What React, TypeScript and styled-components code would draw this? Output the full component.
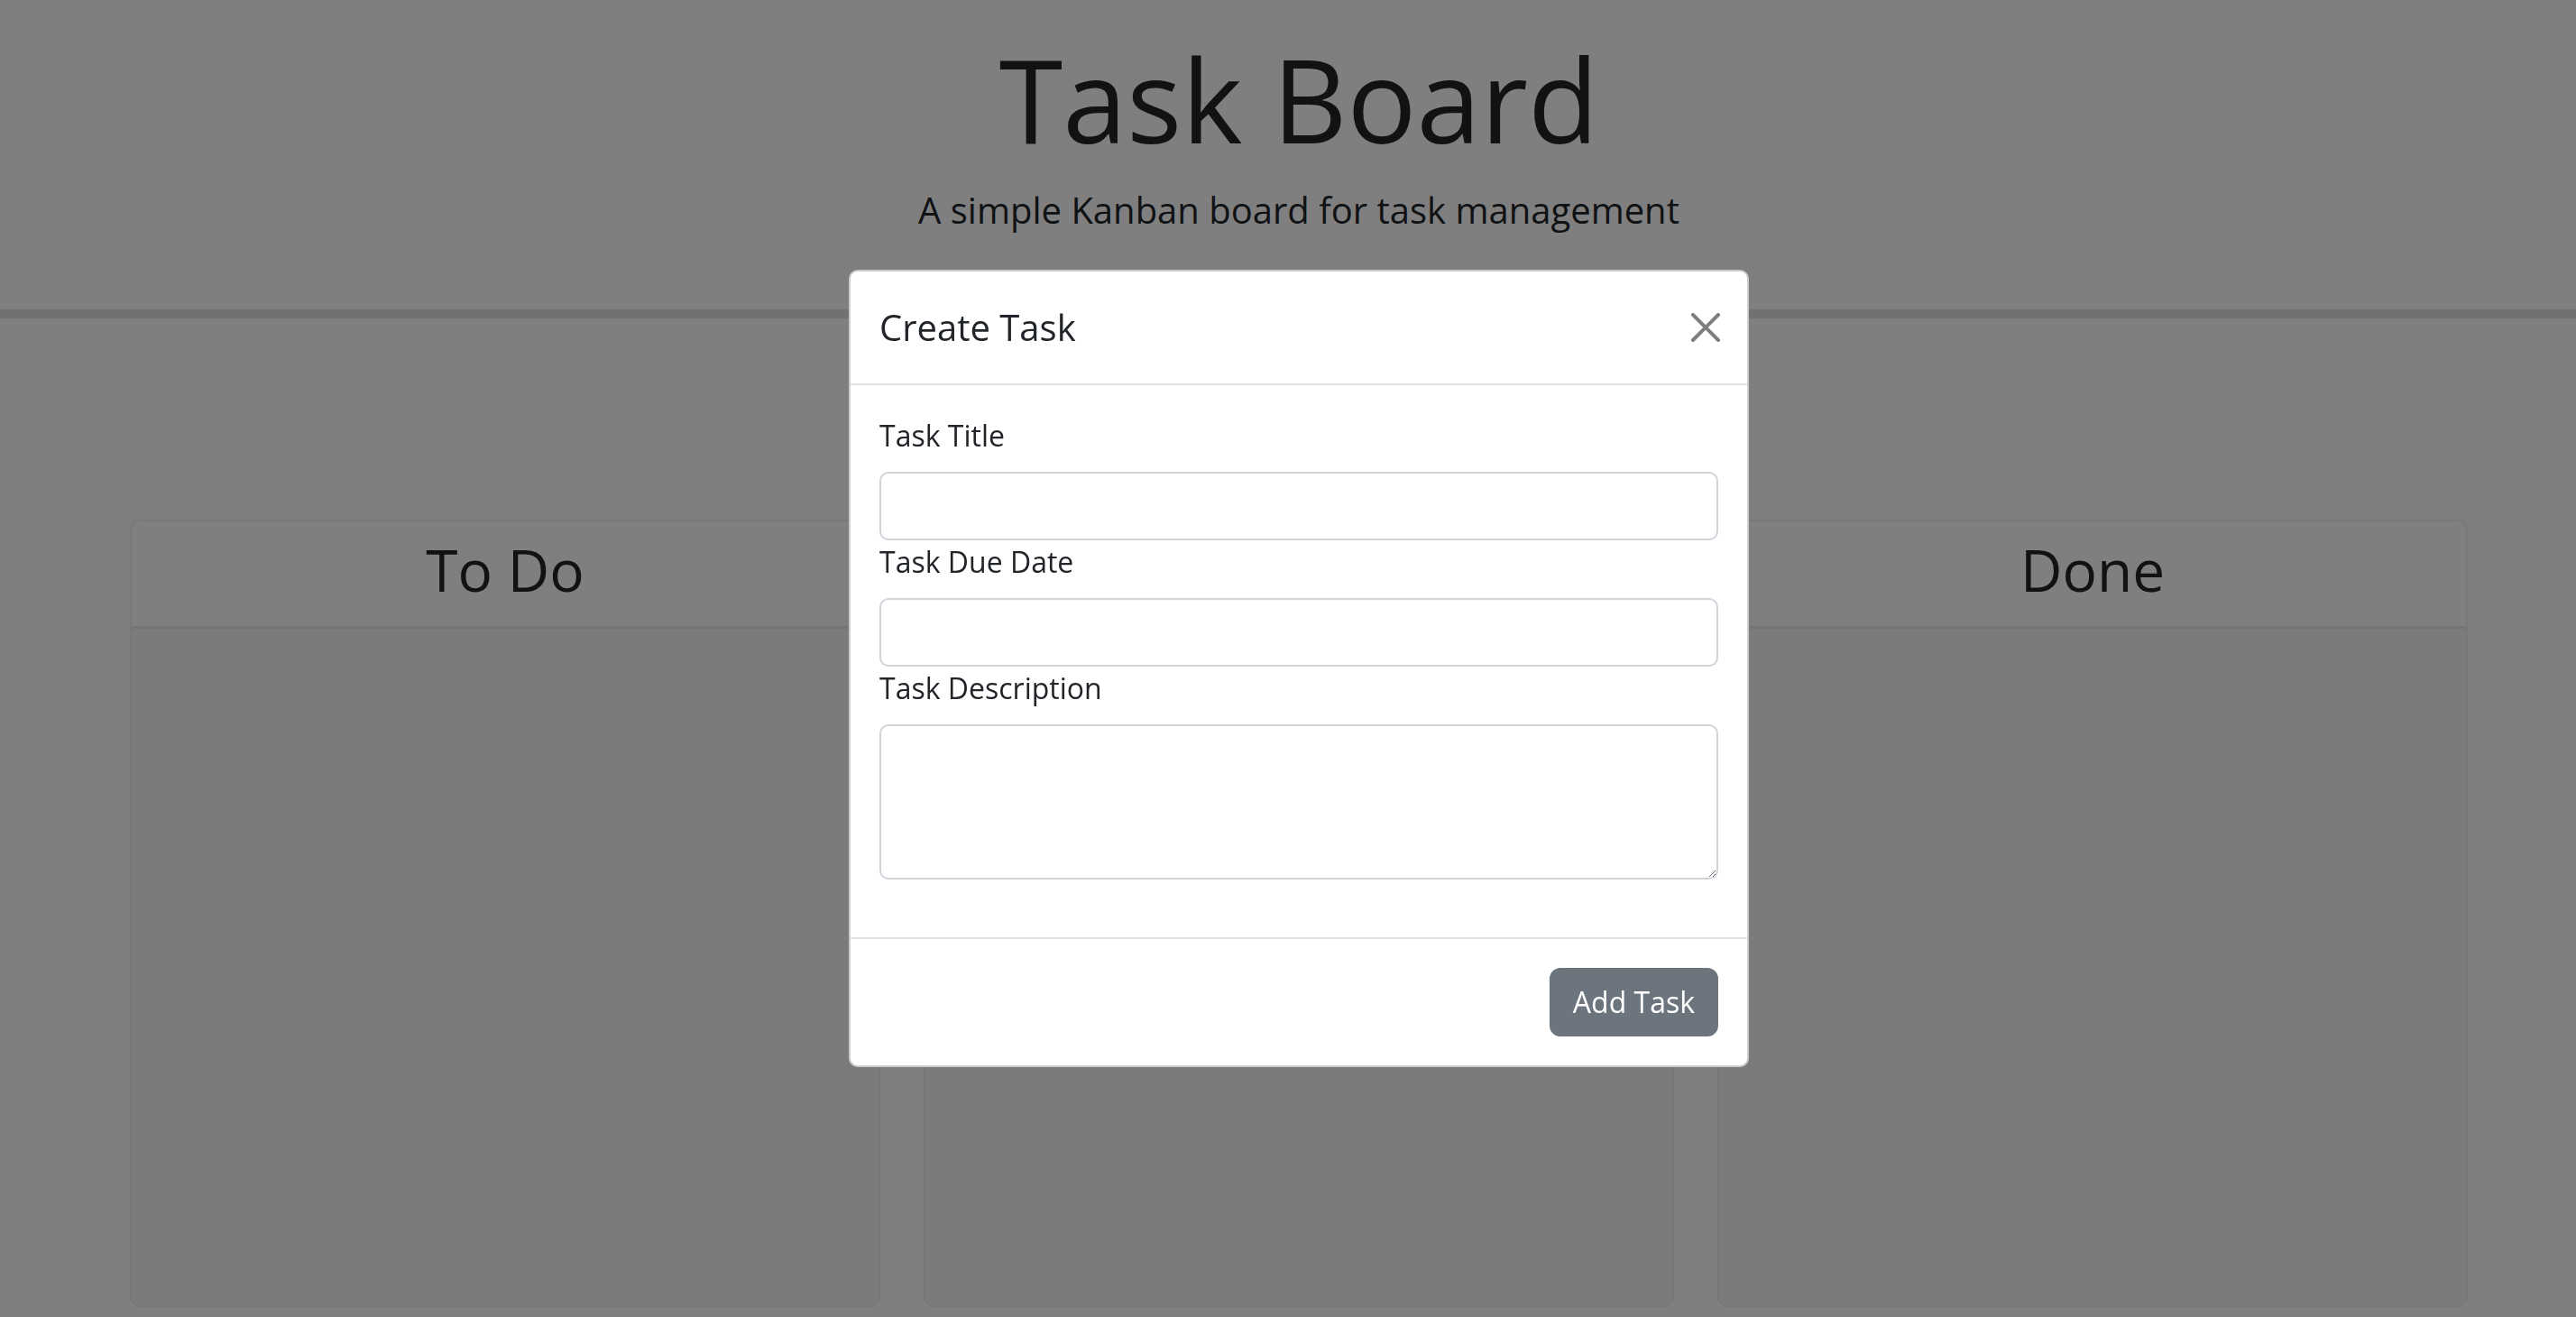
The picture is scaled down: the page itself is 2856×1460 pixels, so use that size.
import React from "react";
import styled, { createGlobalStyle } from "styled-components";

const GlobalStyle = createGlobalStyle`
  html, body {
    margin: 0;
    padding: 0;
    overflow: hidden;
    background: #ffffff;
  }
  body {
    font-family: "Open Sans", "Liberation Sans", sans-serif;
    color: #212529;
  }
  *, *::before, *::after { box-sizing: border-box; }
`;

const Page = styled.div`
  width: 2880px;
  min-height: 1460px;
`;

const Header = styled.header`
  text-align: center;
  padding: 33px 0 80px;
  border-bottom: 10px solid #dee2e6;
`;

const Title = styled.h1`
  font-size: 128px;
  font-weight: 400;
  line-height: 1.2;
  margin: 0 0 16px;
`;

const Lead = styled.p`
  font-size: 40px;
  line-height: 1.5;
  margin: 0;
`;

const Main = styled.main`
  width: 2640px;
  margin: 0 auto;
  padding: 0 24px;
`;

const ActionRow = styled.div`
  display: flex;
  justify-content: center;
  padding: 72px 0 75px;
`;

const Board = styled.div`
  display: grid;
  grid-template-columns: repeat(3, 1fr);
  gap: 48px;
`;

const Card = styled.section`
  height: 873px;
  background: #f7f7f8;
  border: 2px solid rgba(0, 0, 0, 0.025);
  border-radius: 12px;
  overflow: hidden;
`;

const CardHeader = styled.div`
  background: #ffffff;
  padding: 16px 32px;
  text-align: center;
  border-bottom: 3px solid rgba(0, 0, 0, 0.09);
`;

const ColumnTitle = styled.h2`
  font-size: 64px;
  font-weight: 400;
  line-height: 1.2;
  margin: 0 0 8px;
`;

const Button = styled.button<{ $m?: string }>`
  font-family: "Open Sans", "Liberation Sans", sans-serif;
  font-size: 32px;
  line-height: 1.5;
  padding: 12px 24px;
  color: #ffffff;
  background: #6c757d;
  border: 2px solid #6c757d;
  border-radius: 12px;
  margin: ${(p) => p.$m ?? "0"};
  cursor: pointer;
`;

const Overlay = styled.div`
  position: fixed;
  top: 0;
  left: 0;
  width: 2880px;
  height: 100%;
  background: rgba(0, 0, 0, 0.5);
  display: flex;
  justify-content: center;
  align-items: flex-start;
  padding-top: 299px;
`;

const Dialog = styled.div`
  width: 998px;
  background: #ffffff;
  border: 2px solid rgba(0, 0, 0, 0.2);
  border-radius: 10px;
`;

const DialogHeader = styled.div`
  display: flex;
  align-items: center;
  justify-content: space-between;
  padding: 32px;
  border-bottom: 2px solid #dee2e6;
`;

const DialogTitle = styled.h5`
  font-size: 40px;
  font-weight: 400;
  line-height: 1.5;
  margin: 0;
`;

const CloseButton = styled.button`
  width: 32px;
  height: 32px;
  padding: 0;
  margin: 0 -2px 0 auto;
  border: 0;
  background: transparent;
  opacity: 0.5;
  display: flex;
  cursor: pointer;
`;

const DialogBody = styled.div`
  padding: 32px;
`;

const Field = styled.div<{ $last?: boolean }>`
  margin-bottom: ${(p) => (p.$last ? "32px" : "0")};
`;

const Label = styled.label`
  display: block;
  font-size: 32px;
  line-height: 1.5;
  margin-bottom: 16px;
`;

const Input = styled.input`
  display: block;
  width: 100%;
  height: 76px;
  padding: 12px 24px;
  font-family: "Open Sans", "Liberation Sans", sans-serif;
  font-size: 32px;
  line-height: 1.5;
  color: #212529;
  background: #ffffff;
  border: 2px solid #ced4da;
  border-radius: 10px;
  outline: none;
`;

const TextArea = styled.textarea`
  display: block;
  width: 100%;
  height: 172px;
  padding: 12px 24px;
  font-family: "Open Sans", "Liberation Sans", sans-serif;
  font-size: 32px;
  line-height: 1.5;
  color: #212529;
  background: #ffffff;
  border: 2px solid #ced4da;
  border-radius: 10px;
  outline: none;
  resize: vertical;
`;

const DialogFooter = styled.div`
  display: flex;
  justify-content: flex-end;
  align-items: center;
  padding: 24px;
  border-top: 2px solid #dee2e6;
`;

const CloseIcon = () => (
  <svg width="32" height="32" viewBox="0 0 16 16" fill="#000">
    <path d="M.293.293a1 1 0 0 1 1.414 0L8 6.586 14.293.293a1 1 0 1 1 1.414 1.414L9.414 8l6.293 6.293a1 1 0 0 1-1.414 1.414L8 9.414l-6.293 6.293a1 1 0 0 1-1.414-1.414L6.586 8 .293 1.707a1 1 0 0 1 0-1.414z" />
  </svg>
);

const columns = ["To Do", "In Progress", "Done"];

export default function App() {
  return (
    <>
      <GlobalStyle />
      <Page>
        <Header>
          <Title>Task Board</Title>
          <Lead>A simple Kanban board for task management</Lead>
        </Header>
        <Main>
          <ActionRow>
            <Button>Add Task</Button>
          </ActionRow>
          <Board>
            {columns.map((c) => (
              <Card key={c}>
                <CardHeader>
                  <ColumnTitle>{c}</ColumnTitle>
                </CardHeader>
              </Card>
            ))}
          </Board>
        </Main>
      </Page>
      <Overlay>
        <Dialog>
          <DialogHeader>
            <DialogTitle>Create Task</DialogTitle>
            <CloseButton aria-label="Close">
              <CloseIcon />
            </CloseButton>
          </DialogHeader>
          <DialogBody>
            <Field>
              <Label htmlFor="title">Task Title</Label>
              <Input id="title" type="text" />
            </Field>
            <Field>
              <Label htmlFor="due">Task Due Date</Label>
              <Input id="due" type="text" />
            </Field>
            <Field $last>
              <Label htmlFor="desc">Task Description</Label>
              <TextArea id="desc" rows={3} />
            </Field>
          </DialogBody>
          <DialogFooter>
            <Button $m="8px">Add Task</Button>
          </DialogFooter>
        </Dialog>
      </Overlay>
    </>
  );
}
